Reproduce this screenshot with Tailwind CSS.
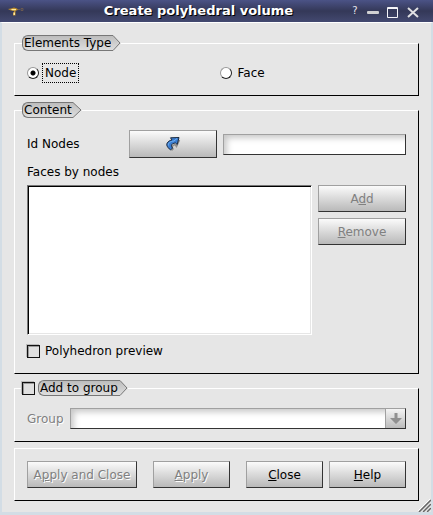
<!DOCTYPE html>
<html lang="en">
<head>
<meta charset="utf-8">
<title>Create polyhedral volume</title>
<script src="https://cdn.jsdelivr.net/npm/@tailwindcss/browser@4"></script>
</head>
<body class="min-h-screen flex flex-col bg-[#e6e6e6] text-black text-[12px] leading-4 font-['DejaVu_Sans','Noto_Sans',sans-serif]">
  <header class="h-[22px] shrink-0 flex items-center pl-2 pr-3 bg-linear-to-b from-[#4b5386] via-[#343858] to-[#434970] text-white">
    <svg class="w-4 h-4 shrink-0" viewBox="0 0 16 16" aria-hidden="true">
      <path d="M0 6l3-.5 3-1 3 1 1 1-1 1H7.500v5H5V9.500h1V8L3 7.500z" fill="#b98a2a"/>
      <path d="M3 6h5v1.200H4zM5.500 9.500H7V12H5.500z" fill="#ffe9a0"/>
      <path d="M10 6.500h2M13 5.500h2v2h-2z" fill="none" stroke="#6b5a50"/>
    </svg>
    <h1 class="flex-1 pl-6 text-center text-[13px] font-bold text-shadow-[1px_1px_0_#000]">Create polyhedral volume</h1>
    <div class="flex items-center gap-1 text-[#e6e6ee]">
      <button type="button" aria-label="What's this" class="w-3 text-[10px] leading-4">?</button>
      <button type="button" aria-label="Minimize" class="w-4 h-4"><svg viewBox="0 0 16 16"><rect x="2" y="8" width="12" height="3" rx="1" fill="#d0d0d2"/></svg></button>
      <button type="button" aria-label="Maximize" class="w-4 h-4"><svg viewBox="0 0 16 16"><path d="M2.500 4.500h10v10h-10zM2 5.500h11" fill="none" stroke="#f4f4f8"/></svg></button>
      <button type="button" aria-label="Close window" class="w-4 h-4"><svg viewBox="0 0 16 16"><path d="M3 5l10 9M13 5L3 14" fill="none" stroke="#e0e0e2" stroke-width="2"/></svg></button>
    </div>
  </header>

  <main class="relative flex-1 border-2 border-t border-b-3 border-t-white border-x-[#d3dde5] border-b-[#d3dde5] px-3 pt-3 pb-2">
    <form class="flex flex-col gap-[6px]">

      <fieldset class="border border-t-white border-l-white border-r-black border-b-black px-3 pb-3">
        <legend class="-ml-[5px] h-4 flex">
          <span class="h-4 pl-px border-y border-l border-[#777] rounded-l-md bg-linear-to-b from-[#bdbdbd] to-[#dedede] leading-[14px]">Elements Type</span>
          <svg class="w-[10px] h-4" viewBox="0 0 10 16" aria-hidden="true"><defs><linearGradient id="chip" x2="0" y2="1"><stop stop-color="#bdbdbd"/><stop offset="1" stop-color="#dedede"/></linearGradient></defs><path d="M0 .5h2l7 7.500-7 7.500H0" fill="url(#chip)" stroke="#777"/></svg>
        </legend>
        <div class="grid grid-cols-2 pt-3">
          <label class="flex items-center gap-[3px]">
            <input type="radio" name="kind" checked class="appearance-none outline-none w-3 h-3 rounded-full border border-[#999] border-r-[#222] border-b-[#222] bg-[radial-gradient(circle,#000_2px,#fff_3px)]">
            <span class="border border-dotted border-black px-[2px] leading-[18px]">Node</span>
          </label>
          <label class="flex items-center gap-[6px] pl-[3px]">
            <input type="radio" name="kind" class="appearance-none w-3 h-3 rounded-full border border-[#999] border-r-[#222] border-b-[#222] bg-white">
            <span>Face</span>
          </label>
        </div>
      </fieldset>

      <fieldset class="border border-t-white border-l-white border-r-black border-b-black px-3 pb-[14px]">
        <legend class="-ml-[5px] h-4 flex">
          <span class="h-4 pl-px border-y border-l border-[#777] rounded-l-md bg-linear-to-b from-[#bdbdbd] to-[#dedede] leading-[14px]">Content</span>
          <svg class="w-[10px] h-4" viewBox="0 0 10 16" aria-hidden="true"><path d="M0 .5h1l8 7.500-8 7.500H0" fill="url(#chip)" stroke="#777"/></svg>
        </legend>
        <div class="flex items-center gap-[6px] pt-3">
          <label for="ids" class="w-24">Id Nodes</label>
          <button type="button" aria-label="Select nodes" class="w-22 h-7 flex items-center justify-center border border-[#a0a0a0] border-r-[#333] border-b-[#333] bg-linear-to-b from-[#fbfbfb] to-[#b9b9b9]">
            <svg class="w-4 h-4" viewBox="0 0 16 16" aria-hidden="true">
              <path d="M6.500 14.500L8 13c-1.500-2-1-3.500 2-4.500l1.500 2 3-6.500" fill="none" stroke="#8d8d8d" stroke-width="1.500"/>
              <path d="M5.500 14C2 11 .5 8.500 3 6c1.200-1.300 2.500-1.700 4-2L5.500 1.800 14 1.500l-1.800 7L10.500 7C6.500 7.500 5.500 9 7.500 12z" fill="#3a7cd0" stroke="#1b2b40"/>
              <path d="M3.500 9.500C3 7 5 5.500 9 5l3-2.500" fill="none" stroke="#72b2f2"/>
            </svg>
          </button>
          <input id="ids" type="text" class="min-w-0 flex-1 h-[21px] px-2 border border-[#a0a0a0] border-r-[#333] border-b-[#333] bg-white shadow-[inset_6px_6px_6px_-3px_#c8c8c8]">
        </div>
        <p id="faces" class="pt-[6px] pb-[5px]">Faces by nodes</p>
        <div class="flex items-start gap-[6px]">
          <select size="5" aria-labelledby="faces" class="appearance-none min-w-0 flex-1 h-[150px] bg-white border border-t-[#777] border-l-[#777] border-r-white border-b-white shadow-[inset_1px_1px_0_#000,inset_-1px_-1px_0_#e6e6e6]"></select>
          <div class="w-22 flex flex-col gap-[6px] text-[#808080] text-shadow-[1px_1px_0_#fff]">
            <button type="button" disabled class="h-[27px] border border-[#a0a0a0] border-r-[#333] border-b-[#333] bg-linear-to-b from-[#fbfbfb] to-[#b9b9b9]">A<u>d</u>d</button>
            <button type="button" disabled class="h-[27px] border border-[#a0a0a0] border-r-[#333] border-b-[#333] bg-linear-to-b from-[#fbfbfb] to-[#b9b9b9]"><u>R</u>emove</button>
          </div>
        </div>
        <label class="flex items-center gap-[5px] pt-2">
          <input type="checkbox" class="appearance-none w-[13px] h-[13px] border border-[#111] bg-[#e0e0e0] shadow-[inset_1px_1px_0_#999,-1px_-1px_0_#bbb]">
          <span>Polyhedron preview</span>
        </label>
      </fieldset>

      <fieldset class="border border-t-white border-l-white border-r-black border-b-black px-3 pb-3">
        <legend class="-ml-[5px] h-4">
          <label class="flex items-center">
            <input type="checkbox" class="appearance-none w-[13px] h-[13px] mr-[3px] border border-[#111] bg-[#e0e0e0] shadow-[inset_1px_1px_0_#999,-1px_-1px_0_#bbb]">
            <span class="h-4 pl-px border-y border-l border-[#777] rounded-l-md bg-linear-to-b from-[#bdbdbd] to-[#dedede] leading-[14px]">Add to group</span>
            <svg class="w-[10px] h-4" viewBox="0 0 10 16" aria-hidden="true"><path d="M0 .5h2l7 7.500-7 7.500H0" fill="url(#chip)" stroke="#777"/></svg>
          </label>
        </legend>
        <div class="flex items-center gap-[6px] pt-3">
          <label for="group" class="text-[#808080] text-shadow-[1px_1px_0_#fff]">Group</label>
          <div class="relative min-w-0 flex-1 h-[21px]">
            <select id="group" disabled class="appearance-none opacity-100 w-full h-full border border-[#a0a0a0] border-r-[#333] border-b-[#333] bg-white shadow-[inset_6px_6px_6px_-3px_#c8c8c8]"></select>
            <span class="absolute top-px bottom-px right-px w-5 border-l border-[#a0a0a0] flex items-center justify-center bg-linear-to-b from-[#f4f4f4] to-[#bcbcbc] pointer-events-none">
              <svg class="w-3 h-3" viewBox="0 0 12 12"><path d="M4.500 0h3v5H12l-6 6-6-6h4.500z" fill="#909090"/></svg>
            </span>
          </div>
        </div>
      </fieldset>

      <div class="flex items-center border border-t-white border-l-white border-r-black border-b-black px-3 py-3">
        <button type="button" disabled class="w-[110px] h-[27px] mr-4 whitespace-nowrap text-[#808080] text-shadow-[1px_1px_0_#fff] border border-[#a0a0a0] border-r-[#333] border-b-[#333] bg-linear-to-b from-[#fbfbfb] to-[#b9b9b9]">A<u>p</u>ply and Close</button>
        <button type="button" disabled class="w-[77px] h-[27px] text-[#808080] text-shadow-[1px_1px_0_#fff] border border-[#a0a0a0] border-r-[#333] border-b-[#333] bg-linear-to-b from-[#fbfbfb] to-[#b9b9b9]"><u>A</u>pply</button>
        <button type="button" class="w-[77px] h-[27px] ml-auto mr-[6px] border border-[#a0a0a0] border-r-[#333] border-b-[#333] bg-linear-to-b from-[#fbfbfb] to-[#b9b9b9]"><u>C</u>lose</button>
        <button type="button" class="w-[77px] h-[27px] border border-[#a0a0a0] border-r-[#333] border-b-[#333] bg-linear-to-b from-[#fbfbfb] to-[#b9b9b9]"><u>H</u>elp</button>
      </div>
    </form>
    <svg class="absolute right-0 bottom-0 w-[13px] h-[13px]" viewBox="0 0 13 13" aria-hidden="true"><path d="M0 12L12 0M4 13l9-9M8 13l5-5" stroke="#fff"/><path d="M1 13L13 1M5 13l8-8M9 13l4-4" stroke="#666" stroke-width="1.500"/></svg>
  </main>
</body>
</html>
